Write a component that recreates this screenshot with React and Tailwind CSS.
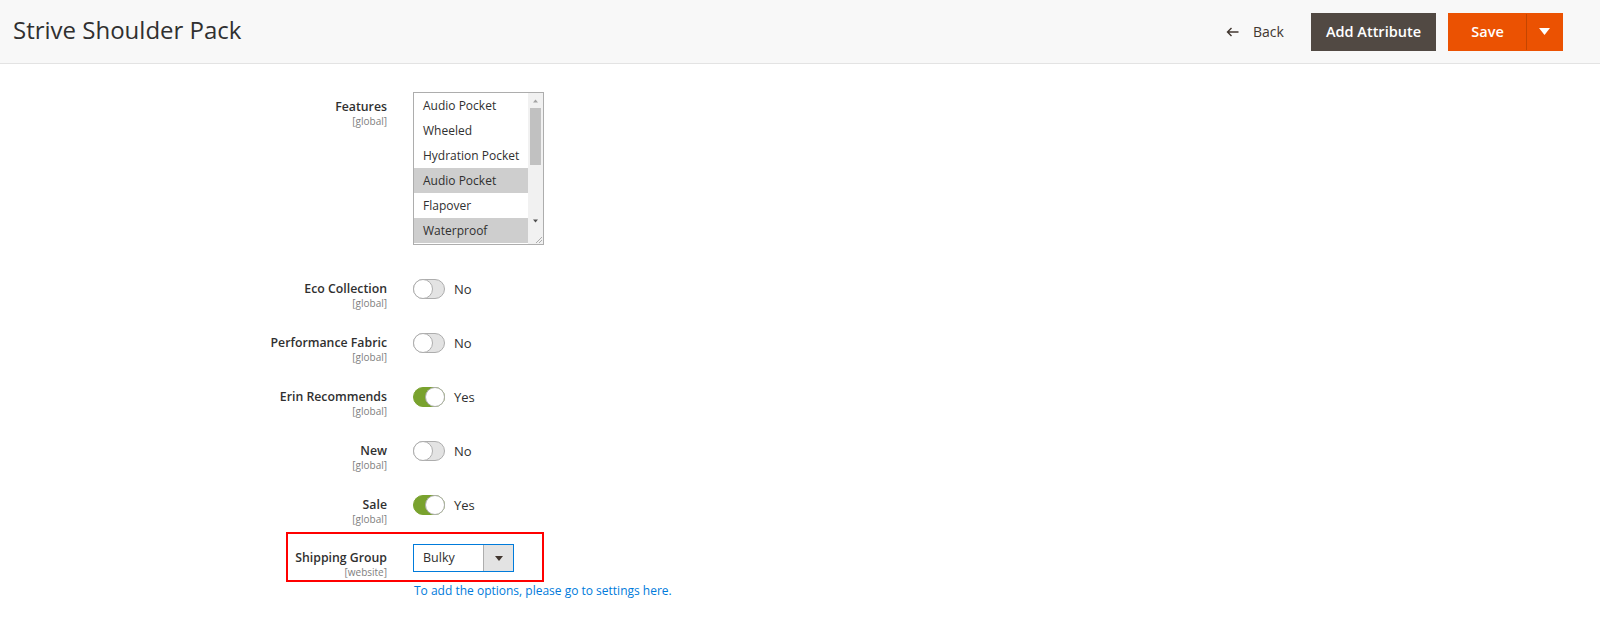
import React from "react";

function Label({ title, scope }) {
  return (
    <div className="w-[387px] shrink-0 text-right">
      <div className="text-[12.3px] leading-[19px] font-semibold text-[#303030]">{title}</div>
      <div className="text-[10px] leading-[12px] text-[#808080] -mt-[1px]">{scope}</div>
    </div>
  );
}

function Toggle({ on }) {
  return (
    <div className="flex items-center gap-[9px]">
      <div
        className={
          on
            ? "relative w-[32px] h-[20px] rounded-full bg-[#79a22e] border border-[#79a22e]"
            : "relative w-[32px] h-[20px] rounded-full bg-[#e3e3e3] border border-[#adadad]"
        }
      >
        <div
          className={
            on
              ? "absolute top-[-1px] right-[-1px] w-[20px] h-[20px] rounded-full bg-white border border-[#adadad]"
              : "absolute top-[-1px] left-[-1px] w-[20px] h-[20px] rounded-full bg-white border border-[#adadad]"
          }
        />
      </div>
      <span className="text-[13px] leading-[20px] text-[#303030]">{on ? "Yes" : "No"}</span>
    </div>
  );
}

function ToggleRow({ title, on, h }) {
  return (
    <div className={"flex items-start gap-[26px] " + h}>
      <Label title={title} scope="[global]" />
      <Toggle on={on} />
    </div>
  );
}

const options = [
  { t: "Audio Pocket", s: false },
  { t: "Wheeled", s: false },
  { t: "Hydration Pocket", s: false },
  { t: "Audio Pocket", s: true },
  { t: "Flapover", s: false },
  { t: "Waterproof", s: true },
];

export default function App() {
  return (
    <div className="w-[1600px] h-[642px] bg-white font-['Open_Sans',sans-serif] overflow-hidden">
      <header className="h-[64px] bg-[#f8f8f8] border-b border-[#e3e3e3] flex items-center pl-[13px] pr-[37px]">
        <h1 className="text-[24px] leading-[30px] text-[#303030] font-normal -mt-[4px]">Strive Shoulder Pack</h1>
        <div className="ml-auto flex items-center">
          <button className="flex items-center gap-[14px] text-[14px] text-[#41362f] mr-[27px]">
            <svg width="13" height="10" viewBox="0 0 13 10" fill="none" stroke="#41362f" strokeWidth="1.4">
              <path d="M12.5 5H1.5M5.5 1L1.5 5L5.5 9" />
            </svg>
            <span>Back</span>
          </button>
          <button className="h-[38px] px-[14px] bg-[#514943] border border-[#514943] text-white text-[14.5px] font-semibold mr-[12px]">
            Add Attribute
          </button>
          <div className="flex h-[38px] bg-[#eb5202] border border-[#eb5202]">
            <button className="w-[78px] text-white text-[14.5px] font-semibold border-r border-[#c44500]">Save</button>
            <button className="w-[35px] flex items-center justify-center">
              <svg width="11" height="7" viewBox="0 0 11 7"><path d="M0 0H11L5.5 7Z" fill="white" /></svg>
            </button>
          </div>
        </div>
      </header>

      <main className="pt-[28px]">
        {/* Features */}
        <div className="flex items-start gap-[26px] h-[187px]">
          <div className="pt-[5px]">
            <Label title="Features" scope="[global]" />
          </div>
          <div className="w-[131px] h-[153px] border border-[#adadad] bg-white flex">
            <div className="flex-1 flex flex-col">
              {options.map((o, i) => (
                <div
                  key={i}
                  className={
                    (o.s ? "bg-[#cecece] " : "") +
                    "h-[25px] leading-[25px] pl-[9px] text-[12px] text-[#303030] whitespace-nowrap"
                  }
                >
                  {o.t}
                </div>
              ))}
            </div>
            <div className="w-[15px] bg-[#f1f1f1] flex flex-col items-center relative">
              <svg width="7" height="14" viewBox="0 0 7 14" className="mt-[1px]"><path d="M1 8.5H6L3.5 5.5Z" fill="#a3a3a3" /></svg>
              <div className="w-[11px] h-[57px] bg-[#c1c1c1]" />
              <div className="flex-1" />
              <svg width="7" height="14" viewBox="0 0 7 14" className="mb-[16px]"><path d="M1 5.5H6L3.5 8.5Z" fill="#505050" /></svg>
              <svg width="10" height="10" viewBox="0 0 10 10" className="absolute bottom-0 right-0">
                <path d="M9 3L3 9M9 6L6 9" stroke="#9a9a9a" strokeWidth="0.8" />
              </svg>
            </div>
          </div>
        </div>

        <ToggleRow title="Eco Collection" on={false} h="h-[54px]" />
        <ToggleRow title="Performance Fabric" on={false} h="h-[54px]" />
        <ToggleRow title="Erin Recommends" on={true} h="h-[54px]" />
        <ToggleRow title="New" on={false} h="h-[54px]" />
        <ToggleRow title="Sale" on={true} h="h-[49px]" />

        {/* Shipping group */}
        <div className="relative">
          <div className="absolute left-[286px] top-[-12px] w-[258px] h-[50px] border-2 border-[#ff0000] pointer-events-none" />
          <div className="flex items-start gap-[26px]">
            <div className="pt-[4px]">
              <Label title="Shipping Group" scope="[website]" />
            </div>
            <div className="w-[101px] h-[28px] border border-[#007bdb] flex bg-white">
              <div className="flex-1 pl-[9px] text-[12.5px] leading-[26px] text-[#303030]">Bulky</div>
              <div className="w-[30px] bg-[#e3e3e3] border-l border-[#adadad] flex items-center justify-center">
                <svg width="8" height="5" viewBox="0 0 8 5"><path d="M0 0H8L4 5Z" fill="#41362f" /></svg>
              </div>
            </div>
          </div>
          <div className="pl-[414px] mt-[5px] text-[12px] leading-[16px] text-[#007bdb]">
            To add the options, please go to settings here.
          </div>
        </div>
      </main>
    </div>
  );
}
